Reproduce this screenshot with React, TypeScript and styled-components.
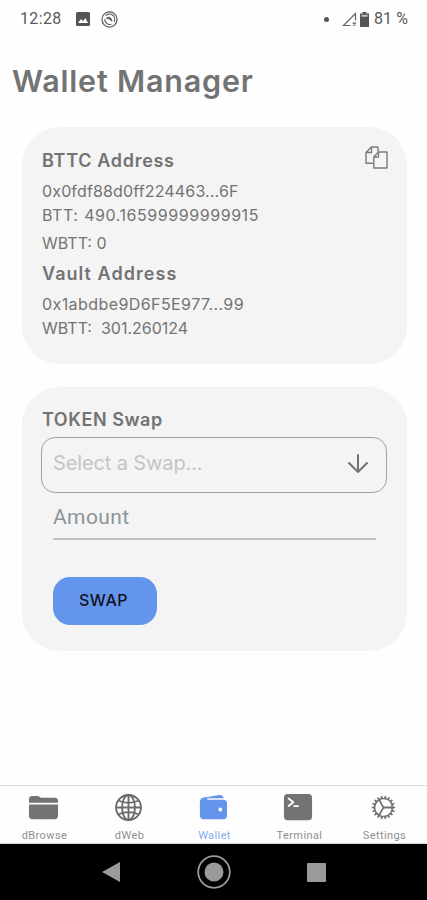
import React from 'react';
import styled, { createGlobalStyle } from 'styled-components';
import { IoFolder, IoWallet, IoTerminal, IoCogOutline } from 'react-icons/io5';

const GlobalStyle = createGlobalStyle`
  * { box-sizing: border-box; }
  body { margin: 0; background: #fff; font-family: Inter, "Noto Sans", sans-serif; }
`;

const Screen = styled.div`
  width: 427px;
  height: 900px;
  display: flex;
  flex-direction: column;
  background: #fefefe;
  color: #737373;
  overflow: hidden;
`;

const StatusBar = styled.header`
  height: 38px;
  flex: none;
  display: flex;
  align-items: center;
  justify-content: space-between;
  padding: 0 18px 0 20px;
  color: #5a5a5a;
  font: 400 16px/20px Roboto, sans-serif;
`;

const StatusGroup = styled.div<{ $gap?: number }>`
  display: flex;
  align-items: center;
  gap: ${(p) => p.$gap ?? 0}px;
  white-space: nowrap;
`;

const Clock = styled.span`
  width: 44px;
  letter-spacing: 0.35px;
`;

const Dot = styled.span`
  width: 5px;
  height: 5px;
  border-radius: 50%;
  background: #555;
  margin-right: 13px;
`;

const Percent = styled.span`
  width: 35px;
  margin-left: 4px;
  letter-spacing: 0.1px;
`;

const Title = styled.h1`
  margin: 23px 0 1px 12px;
  height: 40px;
  flex: none;
  font-size: 30.5px;
  line-height: 40px;
  font-weight: 600;
  letter-spacing: 0.8px;
  white-space: nowrap;
`;

const Card = styled.section<{ $height: number; $top: number }>`
  margin: ${(p) => p.$top}px 20px 0 22px;
  height: ${(p) => p.$height}px;
  flex: none;
  border-radius: 38px;
  background: #f4f4f4;
  box-shadow: 0 1px 1px rgba(0, 0, 0, 0.05);
  padding: 0 19px 0 20px;
`;

const CardHead = styled.div`
  display: flex;
  justify-content: space-between;
  padding-top: 18px;
  height: 52px;

  svg {
    margin-top: 1px;
  }
`;

const Heading = styled.h2<{ $spacing: number }>`
  margin: 0;
  height: 32px;
  font-size: 18px;
  line-height: 32px;
  font-weight: 600;
  letter-spacing: ${(p) => p.$spacing}px;
  white-space: nowrap;
`;

const VaultHeading = styled(Heading)`
  height: 33px;
  line-height: 30px;
`;

const Line = styled.div<{ $spacing: number; $height?: number; $gap?: number }>`
  height: ${(p) => p.$height ?? 24}px;
  line-height: ${(p) => p.$height ?? 24}px;
  font-size: 16px;
  letter-spacing: ${(p) => p.$spacing}px;
  word-spacing: ${(p) => p.$gap ?? 0}px;
  white-space: pre;
`;

const SwapHeading = styled(Heading)`
  padding-top: 17px;
  height: 50px;
`;

const Select = styled.div`
  height: 56px;
  width: 346px;
  margin-left: -1px;
  border: 1px solid #a2a2a2;
  border-radius: 14px;
  display: flex;
  align-items: center;
  justify-content: space-between;
  padding: 0 17px 4px 11px;
  color: #c4c4c8;
`;

const Placeholder = styled.span`
  font-size: 20px;
  letter-spacing: -0.12px;
  white-space: nowrap;
`;

const Amount = styled.div`
  margin: 0 12px 0 11px;
  height: 47px;
  border-bottom: 2px solid #bec3c5;
  color: #8b949a;
  font: 400 21px/48px Roboto, sans-serif;
  letter-spacing: 0.4px;
`;

const SwapButton = styled.button`
  display: block;
  margin: 37px 0 0 11px;
  width: 104px;
  height: 48px;
  border: 0;
  border-radius: 17px;
  padding: 0 3px 2px 0;
  background: #6495ed;
  color: #10131c;
  font: 500 16px/20px Inter, sans-serif;
  letter-spacing: 0.5px;
`;

const TabBar = styled.nav`
  margin-top: auto;
  height: 59px;
  flex: none;
  display: grid;
  grid-template-columns: repeat(5, 1fr);
  padding-left: 2px;
  border-top: 1px solid #dedede;
  border-bottom: 1px solid #d8d8d8;
`;

const Tab = styled.a<{ $active?: boolean }>`
  display: flex;
  flex-direction: column;
  align-items: center;
  color: ${(p) => (p.$active ? '#6495ed' : '#737373')};
`;

const TabIcon = styled.div`
  height: 42px;
  margin-left: -3px;
  display: flex;
  align-items: center;
`;

const TabLabel = styled.span`
  font: 400 11px/16px Roboto, sans-serif;
  letter-spacing: 0.4px;
  opacity: 0.8;
`;

const SystemBar = styled.footer`
  height: 56px;
  flex: none;
  display: grid;
  grid-template-columns: repeat(3, 102.5px);
  justify-content: center;
  justify-items: center;
  align-items: center;
  background: #000;
`;

const PictureIcon = () => (
  <svg width="14" height="14" viewBox="0 0 14 14">
    <rect width="14" height="14" rx="1.5" fill="#555" />
    <path d="M2 11l3-4 2 2.2L9.3 6 12 11z" fill="#fff" />
  </svg>
);

const SwirlIcon = () => (
  <svg width="17" height="17" viewBox="0 0 18 18" fill="none" stroke="#5a5a5a">
    <circle cx="9" cy="9" r="8" strokeWidth="1.3" />
    <path d="M13.8 11.5A5.5 5.5 0 0 0 5 5M4 8.5A5.3 5.3 0 0 0 11 14" strokeWidth="1.2" />
    <path d="M5.8 7.5C8 5.5 11.5 7 11.5 10.8L9.3 8.8z" fill="#555" />
  </svg>
);

const SignalIcon = () => (
  <svg width="17" height="15" viewBox="0 0 17 15" fill="none" stroke="#666" strokeWidth="1.2">
    <path d="M8.5 13.5H1.5L13.5 1.5V8.5" />
    <path d="M10.8 10.5l3 3M13.8 10.5l-3 3" />
  </svg>
);

const BatteryIcon = () => (
  <svg width="11" height="15" viewBox="0 0 10 15">
    <path d="M3 0h4v1.4h2.5V15H.5V1.4H3z" fill="#555" />
    <path d="M1.8 2.8h6.4v2H1.8z" fill="#bbb" />
  </svg>
);

const CopyIcon = () => (
  <svg width="23" height="23" viewBox="0 0 23 23" fill="none" stroke="#7b7b7b" strokeWidth="1.4" strokeLinejoin="round">
    <path d="M8 17.2H1V6.5L6.5 1H13v4.5M6.5 1v5.5H1" />
    <path d="M13.5 6H22v16H8.8V11z" fill="#f4f4f4" />
    <path d="M13.5 6v5H8.8" />
  </svg>
);

const ArrowDown = () => (
  <svg width="22" height="22" viewBox="0 0 22 22" fill="none" stroke="#737373" strokeWidth="2" strokeLinecap="round" strokeLinejoin="round">
    <path d="M11 3v17M2 11l9 9 9-9" />
  </svg>
);

const GlobeIcon = () => (
  <svg width="27" height="27" viewBox="0 0 26 26" fill="none" stroke="#6a6a6a" strokeWidth="1.8">
    <circle cx="13" cy="13" r="12" />
    <ellipse cx="13" cy="13" rx="6.2" ry="12" />
    <path d="M13 1v24M1 13h24M3.5 6.5q9.5 4 19 0M3.5 19.5q9.5-4 19 0" />
  </svg>
);

const BackIcon = () => (
  <svg width="18" height="20" viewBox="0 0 18 20">
    <path d="M0 10L18 0v20z" fill="#9a9a9a" />
  </svg>
);

const HomeIcon = () => (
  <svg width="34" height="34" viewBox="0 0 34 34">
    <circle cx="17" cy="17" r="15.8" fill="none" stroke="#9a9a9a" strokeWidth="1.8" />
    <circle cx="17" cy="17" r="9.5" fill="#9a9a9a" />
  </svg>
);

const RecentIcon = () => (
  <svg width="19" height="19" viewBox="0 0 19 19">
    <rect width="19" height="19" rx="1" fill="#9a9a9a" />
  </svg>
);

const tabs = [
  { label: 'dBrowse', icon: <IoFolder size={31} /> },
  { label: 'dWeb', icon: <GlobeIcon /> },
  { label: 'Wallet', icon: <IoWallet size={31} />, active: true },
  { label: 'Terminal', icon: <IoTerminal size={30} /> },
  { label: 'Settings', icon: <IoCogOutline size={29} stroke="#5f5f5f" /> },
];

export default function App() {
  return (
    <Screen>
      <GlobalStyle />
      <StatusBar>
        <StatusGroup $gap={11.5}>
          <Clock>12:28</Clock>
          <PictureIcon />
          <SwirlIcon />
        </StatusGroup>
        <StatusGroup>
          <Dot />
          <SignalIcon />
          <BatteryIcon />
          <Percent>81 %</Percent>
        </StatusGroup>
      </StatusBar>
      <Title>Wallet Manager</Title>
      <Card $top={25} $height={236}>
        <CardHead>
          <Heading $spacing={0.7}>BTTC Address</Heading>
          <CopyIcon />
        </CardHead>
        <Line $spacing={0.15}>0x0fdf88d0ff224463...6F</Line>
        <Line $spacing={0.55} $gap={-2.2}>BTT:  490.16599999999915</Line>
        <Line $spacing={0} $height={32}>WBTT: 0</Line>
        <VaultHeading $spacing={1.05}>Vault Address</VaultHeading>
        <Line $spacing={0.42}>0x1abdbe9D6F5E977...99</Line>
        <Line $spacing={0}>WBTT:  301.260124</Line>
      </Card>
      <Card $top={24} $height={263}>
        <SwapHeading $spacing={0.55}>TOKEN Swap</SwapHeading>
        <Select>
          <Placeholder>Select a Swap...</Placeholder>
          <ArrowDown />
        </Select>
        <Amount>Amount</Amount>
        <SwapButton>SWAP</SwapButton>
      </Card>
      <TabBar>
        {tabs.map((tab) => (
          <Tab key={tab.label} $active={tab.active}>
            <TabIcon>{tab.icon}</TabIcon>
            <TabLabel>{tab.label}</TabLabel>
          </Tab>
        ))}
      </TabBar>
      <SystemBar>
        <BackIcon />
        <HomeIcon />
        <RecentIcon />
      </SystemBar>
    </Screen>
  );
}
